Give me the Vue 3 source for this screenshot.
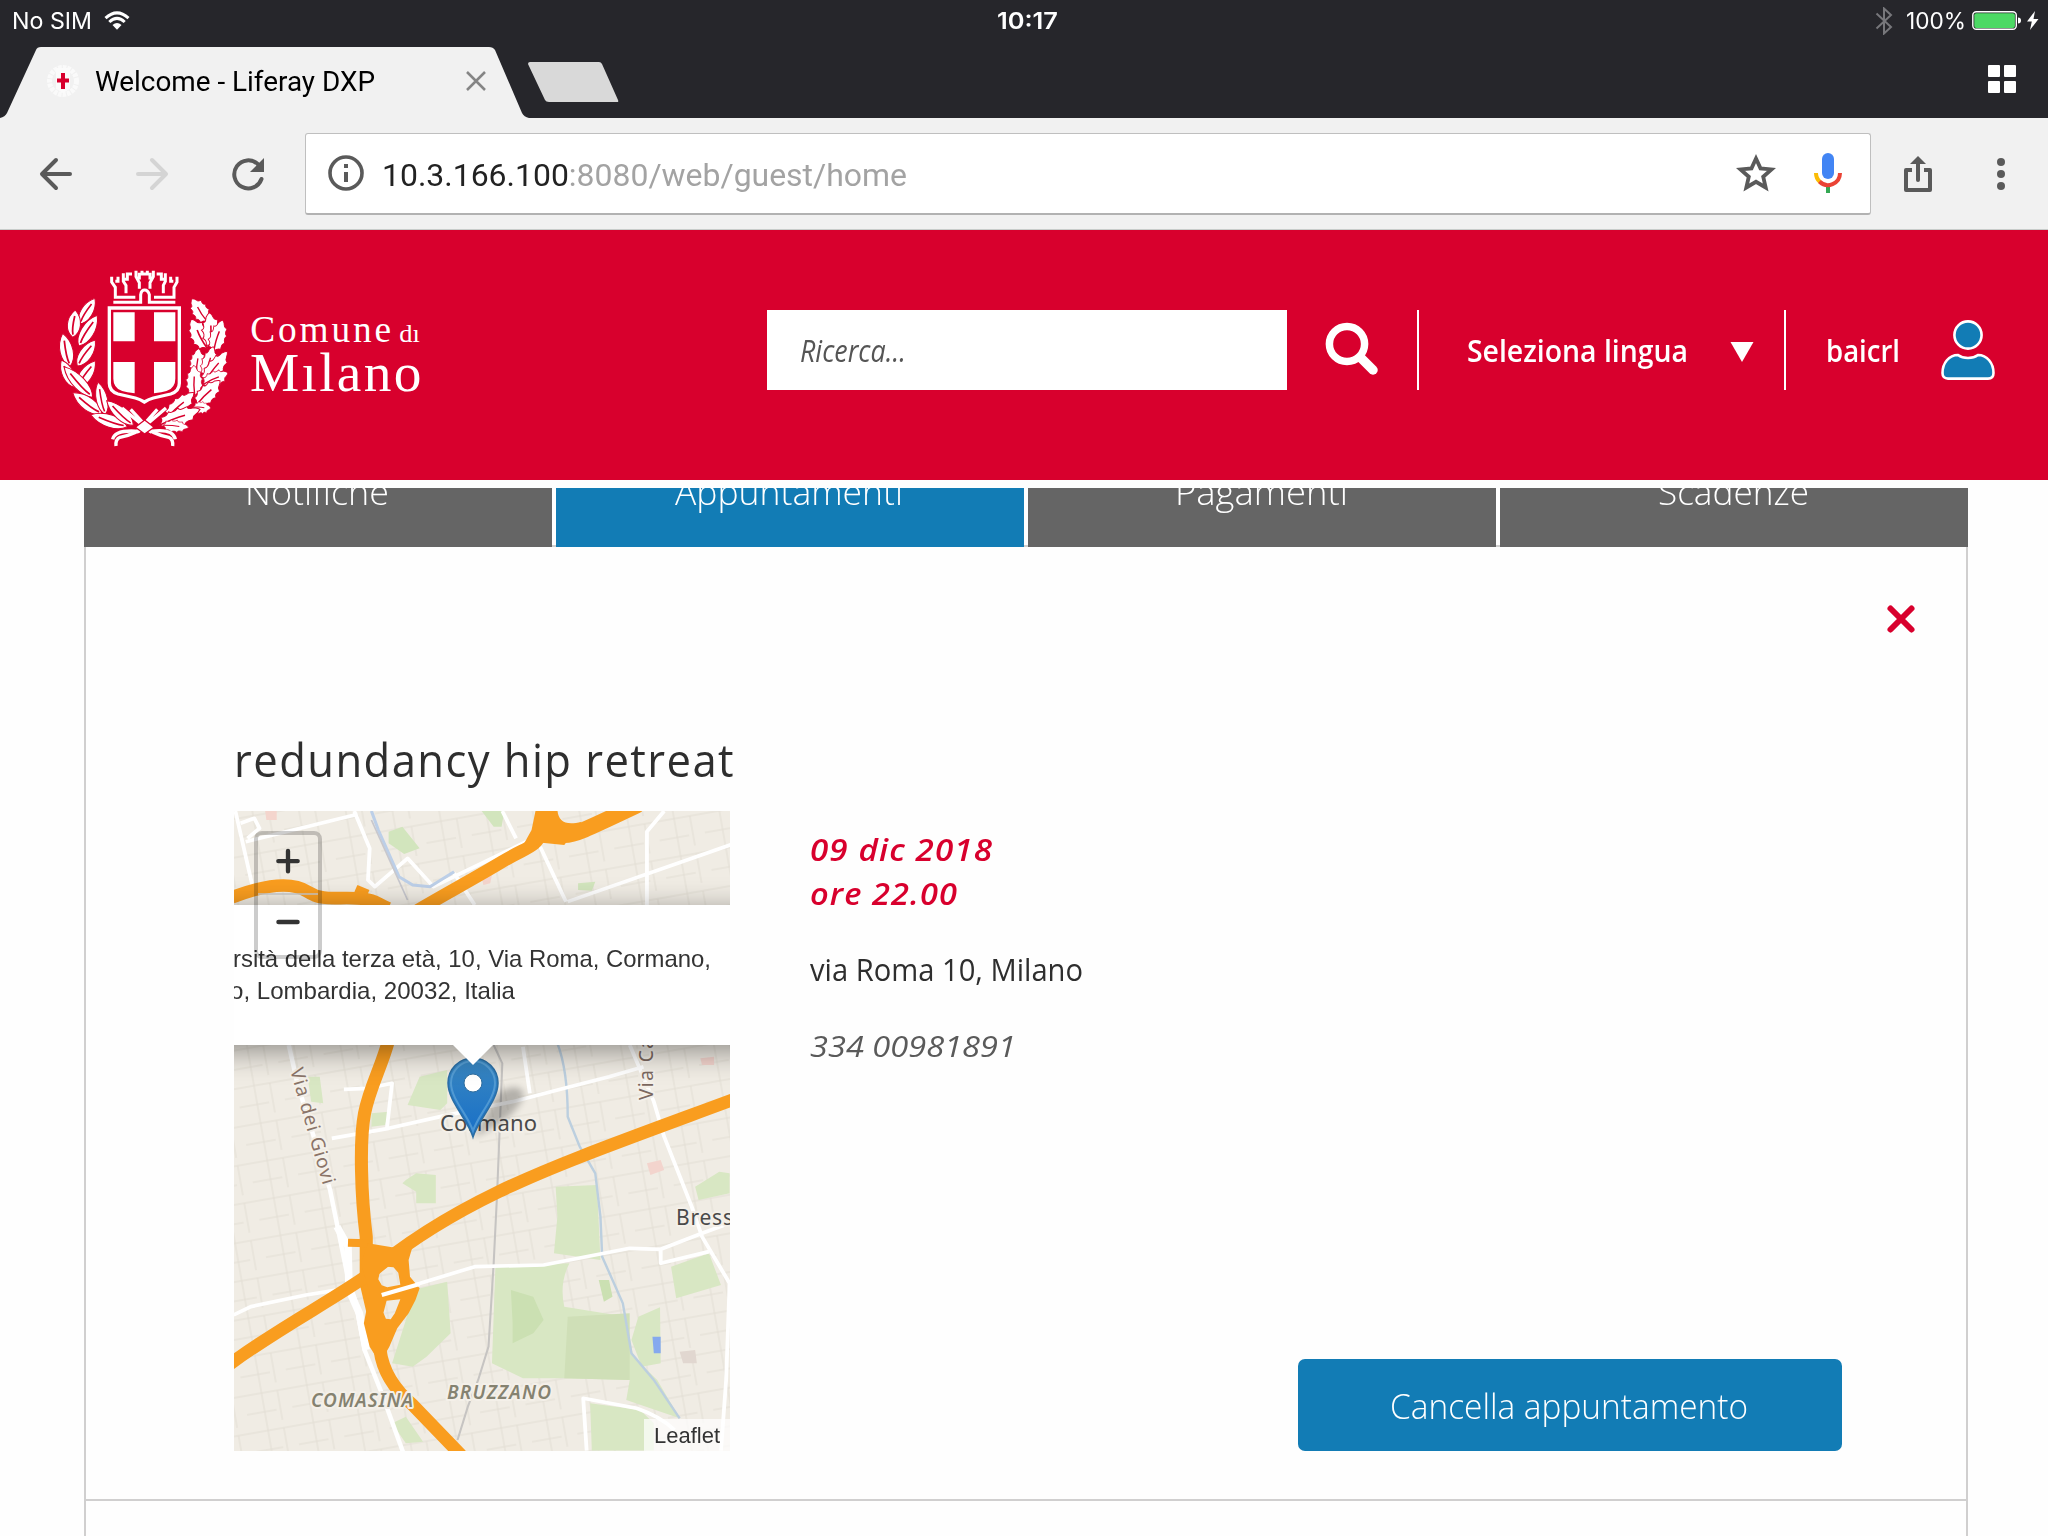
<script setup>
// Stretches a line of text horizontally so that it fills the given width.
const fit = (el, { value }) => {
  el.style.transform = 'none'
  el.style.marginRight = '0'
  const natural = el.getBoundingClientRect().width
  el.style.transform = `scaleX(${value / natural})`
  el.style.marginRight = `${value - natural}px`
}
const vFit = { mounted: fit }

const tabs = [
  { label: 'Notifiche', width: 144 },
  { label: 'Appuntamenti', width: 228, active: true },
  { label: 'Pagamenti', width: 173 },
  { label: 'Scadenze', width: 151 }
]

// Wreath leaves: base x, base y, tip x, tip y, width factor
const place = ([bx, by, tx, ty, w]) => {
  const len = Math.hypot(tx - bx, ty - by) / 100
  const deg = (Math.atan2(ty - by, tx - bx) * 180) / Math.PI + 90
  return `translate(${bx} ${by}) rotate(${deg.toFixed(1)}) scale(${w} ${len.toFixed(3)})`
}
const laurel = [
  [118, 222, 165, 145, 0.95], [98, 262, 106, 180, 1.05], [116, 288, 172, 196, 1.05],
  [90, 350, 68, 250, 1.05], [112, 348, 166, 270, 1], [104, 412, 64, 330, 0.95],
  [112, 412, 166, 332, 1], [158, 442, 72, 350, 1], [186, 492, 98, 428, 1.05],
  [196, 494, 174, 396, 0.9], [262, 530, 152, 494, 1], [280, 526, 200, 452, 0.95]
].map(place)
const oak = [
  [500, 212, 456, 146, 0.85], [500, 292, 454, 208, 1], [520, 290, 508, 188, 0.95],
  [522, 300, 548, 210, 0.85], [470, 372, 476, 296, 0.8], [498, 378, 520, 290, 0.8],
  [494, 396, 562, 304, 0.85], [492, 402, 564, 368, 0.8], [464, 434, 462, 346, 0.85],
  [472, 462, 540, 392, 0.9], [462, 472, 512, 474, 0.6], [382, 502, 462, 428, 0.85],
  [362, 524, 480, 478, 0.9], [372, 526, 446, 532, 0.6]
].map(place)
</script>

<template>
  <div class="screen">
    <div class="status">
      <div class="side">
        <span v-fit="80">No SIM</span>
        <svg class="wifi" width="26" height="20" viewBox="0 0 26 20" fill="none" stroke="#fff" stroke-width="3">
          <path d="M1.5 7.2Q13-3.6 24.500 7.200M5.300 11Q13 3.800 20.700 11" />
          <path d="M8.500 14Q13 10 17.500 14L13 18.800Z" fill="#fff" stroke="none" />
        </svg>
      </div>
      <span v-fit="61" class="clock">10:17</span>
      <div class="side end">
        <svg width="18" height="28" viewBox="0 0 18 28" fill="none" stroke="#77777b" stroke-width="2">
          <path d="M1.500 6.500 16 20 9 26.500V1.500L16 8 1.500 21.500" />
        </svg>
        <span v-fit="60" class="percent">100%</span>
        <svg width="68" height="22" viewBox="0 0 68 22">
          <rect x=".8" y="1.800" width="43.500" height="17.500" rx="3.500" fill="none" stroke="#fff" stroke-width="1.400" />
          <rect x="2.300" y="3.200" width="40.600" height="14.700" rx="2" fill="#4cd964" />
          <path d="M46 7.500q3 0 3 3t-3 3z" fill="#fff" />
          <path d="M63 1 55 11.500h4.800L58 20l8.500-11h-5z" fill="#fff" />
        </svg>
      </div>
    </div>

    <div class="strip">
      <svg class="shape" width="640" height="71" viewBox="0 0 640 71">
        <path d="M0 71Q5 70 7 66L36 3Q37 0 41 0H489Q493 0 495 3L522 66Q524 70 529 71Z" fill="#f1f1f1" />
        <path d="M530 15H599Q601 15 602 17L618 53Q619 55 617 55H549Q546 55 545 53L528 17Q528 15 530 15Z" fill="#d9d9d9" />
      </svg>
      <div class="tab">
        <svg width="34" height="36" viewBox="0 0 34 36">
          <circle cx="17" cy="18" r="13.500" fill="none" stroke="#fafafa" stroke-width="5" stroke-dasharray="3.500 1" />
          <path d="M10 5h14v21l-7 4-7-4z" fill="#fbfbfb" />
          <path d="M17 10v16M11 17.500h12" stroke="#d8002d" stroke-width="4" />
        </svg>
        <span v-fit="280" class="tab-title">Welcome - Liferay DXP</span>
        <svg width="22" height="22" viewBox="0 0 22 22" stroke="#858585" stroke-width="2.500"><path d="M2 2 20 20M20 2 2 20" /></svg>
      </div>
      <div class="grid"><i></i><i></i><i></i><i></i></div>
    </div>

    <div class="toolbar">
      <svg width="36" height="36" viewBox="0 0 36 36" fill="none" stroke="#5a5a5a" stroke-width="4" stroke-linecap="round" stroke-linejoin="round"><path d="M32 18H4.500M18 4 4 18l14 14" /></svg>
      <svg class="next" width="36" height="36" viewBox="0 0 36 36" fill="none" stroke="#d4d4d4" stroke-width="4" stroke-linecap="round" stroke-linejoin="round"><path d="M4 18h27.500M18 4l14 14-14 14" /></svg>
      <svg class="reload" width="36" height="36" viewBox="0 0 36 36">
        <path d="M28 8.300A14 14 0 1 0 31.500 23" fill="none" stroke="#5a5a5a" stroke-width="4" stroke-linecap="round" />
        <path d="M34 2v14H20z" fill="#5a5a5a" />
      </svg>
      <div class="address">
        <svg class="info" width="36" height="36" viewBox="0 0 36 36">
          <circle cx="18" cy="18" r="16" fill="none" stroke="#5a5a5a" stroke-width="3.600" />
          <path d="M18 9v4M18 17v10" stroke="#5a5a5a" stroke-width="4" />
        </svg>
        <span v-fit="525" class="url">10.3.166.100<em>:8080/web/guest/home</em></span>
        <svg class="star" width="40" height="40" viewBox="0 0 40 40"><path d="M20 5.500 24.500 15.400 35.500 16.400 27.200 23.700 29.700 34.500 20 28.800 10.300 34.500 12.800 23.700 4.500 16.400 15.500 15.400Z" fill="none" stroke="#5a5a5a" stroke-width="3.800" /></svg>
        <svg width="28" height="40" viewBox="0 0 28 40" fill="none" stroke-width="4">
          <rect x="8" y="0" width="12" height="26" rx="6" fill="#4285f4" />
          <path d="M12 33h4v7h-4z" fill="#34a853" />
          <path d="M2 20A12 12 0 0 0 6 29" stroke="#fbbc05" />
          <path d="M5.500 28.500A12 12 0 0 0 26 20" stroke="#ea4335" />
        </svg>
      </div>
      <svg class="share" width="28" height="36" viewBox="0 0 28 36">
        <path d="M8 14H2V34H26V14H20" fill="none" stroke="#5a5a5a" stroke-width="4" stroke-linejoin="round" />
        <path d="M14 24V5" stroke="#5a5a5a" stroke-width="4" stroke-linecap="round" />
        <path d="M14 0 22 8H6Z" fill="#5a5a5a" />
      </svg>
      <svg class="dots" width="8" height="32" viewBox="0 0 8 32" fill="#5a5a5a"><circle cx="4" cy="4" r="4" /><circle cx="4" cy="16" r="4" /><circle cx="4" cy="28" r="4" /></svg>
    </div>

    <header class="header">
      <svg class="logo" width="400" height="220" viewBox="0 0 1200 660">
        <defs>
          <g id="laurel-leaf">
            <path d="M0 0C-24-20-26-68 0-100C26-68 24-20 0 0Z" fill="#fff" stroke="#d8002d" stroke-width="3" />
            <path d="M0-10C-5-30-3-50 0-78" fill="none" stroke="#d8002d" stroke-width="5" />
          </g>
          <g id="oak-leaf">
            <path d="M0 4C-8-6-12-8-22-6C-18-18-22-22-30-28C-22-34-24-44-31-52C-20-54-22-62-24-74C-14-72-14-80-12-88Q-6-96 0-100Q8-94 10-86C12-78 18-78 24-76C20-64 20-58 30-54C22-46 24-38 30-30C20-26 20-18 22-8C12-8 8-6 0 4Z" fill="#fff" stroke="#d8002d" stroke-width="3" />
            <path d="M0 2Q-4-34 0-62" fill="none" stroke="#d8002d" stroke-width="5" />
          </g>
        </defs>
        <use v-for="(t, i) in laurel" :key="'l' + i" href="#laurel-leaf" :transform="t" />
        <use v-for="(t, i) in oak" :key="'o' + i" href="#oak-leaf" :transform="t" />
        <g fill="none" stroke="#fff" stroke-width="10">
          <path d="M246 474 330 544Q400 534 406 568M272 478 336 548M378 474 296 544Q224 538 218 568M352 478 290 548" />
          <path d="M314 528Q336 552 386 562Q400 568 398 588M314 528Q290 552 240 562Q226 568 228 588" />
        </g>
        <path d="M314 510 342 532 314 552 286 532Z" fill="#fff" stroke="#d8002d" stroke-width="4" />
        <path d="M208 174H418V400Q418 424 392 432L340 444Q326 448 313 456Q300 448 286 444L234 432Q208 424 208 400Z" fill="#d8002d" stroke="#fff" stroke-width="10" />
        <path d="M220 187H284V274H220ZM342 187H406V274H342ZM220 336H284V430Q236 426 226 408Q220 398 220 386ZM342 336H406V386Q406 398 400 408Q390 426 342 430Z" fill="#fff" />
        <g fill="none" stroke="#fff" stroke-width="9">
          <path d="M220 157H302V134Q304 120 314 120Q324 120 328 134V157H406" />
          <path d="M286 142H226V112L215 96V80M342 142H402V112L411 96V80M226 94H234V80M400 94H392V80M258 130V106L250 94V70M370 130V106L376 94V70M250 88H262V72H276M376 88H364V72H350M298 116V98L288 80V62M330 116V98L340 80V62M288 84H298V68M340 84H330V68M306 62V72H322V62" />
        </g>
        <g class="wordmark" fill="#fff">
          <text x="631" y="276" font-size="112" textLength="422" lengthAdjust="spacing">Comune</text>
          <text x="1078" y="276" font-size="78" textLength="62" lengthAdjust="spacingAndGlyphs">dı</text>
          <text x="630" y="422" font-size="166" textLength="514" lengthAdjust="spacing">Mılano</text>
        </g>
      </svg>
      <div class="search"><span v-fit="106">Ricerca...</span></div>
      <svg class="lens" width="54" height="54" viewBox="0 0 54 54" fill="none" stroke="#fff">
        <circle cx="22" cy="22" r="17.600" stroke-width="7.500" />
        <path d="M36 36 48 48" stroke-width="9.500" stroke-linecap="round" />
      </svg>
      <div class="lang">
        <span v-fit="221">Seleziona lingua</span>
        <svg width="24" height="20" viewBox="0 0 24 20" fill="#fff"><path d="M.5 0H23.500L12 20Z" /></svg>
      </div>
      <div class="user">
        <span v-fit="74">baicrl</span>
        <svg width="54" height="60" viewBox="0 0 54 60" fill="#127cb5" stroke="#fff" stroke-width="2.600">
          <circle cx="27" cy="15" r="13.600" />
          <path d="M1.500 53C1.500 43 8 35 17 35Q21 38 27 38T37 35C46 35 52.500 43 52.500 53Q52.500 58.600 47 58.600H7Q1.500 58.600 1.500 53Z" />
        </svg>
      </div>
    </header>

    <main class="content">
      <nav class="tabs">
        <div v-for="t in tabs" :key="t.label" class="item" :class="{ active: t.active }">
          <span v-fit="t.width">{{ t.label }}</span>
        </div>
      </nav>
      <section class="panel">
        <div class="close">
          <svg width="30" height="30" viewBox="0 0 30 30" stroke="#d8002d" stroke-width="6" stroke-linecap="round"><path d="M4.500 4.500 25.500 25.500M25.500 4.500 4.500 25.500" /></svg>
        </div>
        <h1><span v-fit="501">redundancy hip retreat</span></h1>
        <div class="row">
          <div class="map">
            <svg width="496" height="640" viewBox="0 0 496 640">
              <defs>
                <pattern id="streets" width="46" height="38" patternUnits="userSpaceOnUse" patternTransform="rotate(-10)">
                  <path d="M0 8H46M18 0V38M0 27H30M34 8V38" fill="none" stroke="#d9d4c9" stroke-width="1" />
                </pattern>
                <linearGradient id="pin" x1="0" y1="0" x2="0" y2="1"><stop offset="0" stop-color="#3a87c0" /><stop offset="1" stop-color="#176fc8" /></linearGradient>
                <filter id="soft" x="-30%" y="-30%" width="160%" height="160%"><feGaussianBlur stdDeviation="3.500" /></filter>
              </defs>
              <rect width="496" height="640" fill="#f0ece4" />
              <rect width="496" height="640" fill="url(#streets)" opacity=".6" />

              <g transform="matrix(.3444 0 0 .3333 -14.12 -91)">
                <path d="M760 273H826L818 320H795ZM490 335 530 320 580 385 535 402 490 370ZM1040 490 1090 485 1080 512 1040 510Z" fill="#d2e5bd" />
                <path d="M130 262H165V300H135ZM760 470 790 465 785 490 765 495Z" fill="#f4d5cd" />
                <g fill="none" stroke="#fff" stroke-width="11" stroke-linejoin="round">
                  <path d="M45 273 95 500M60 310 100 295 115 325 80 355M75 365 400 283M390 273 435 385 430 480 450 500 545 415 620 500 900 360M820 273 860 355M1290 273 1240 335V555M930 380 1005 545M1010 545 1490 372M680 460 740 555" />
                </g>
                <path d="M440 273 460 330 520 470 560 495 610 500 680 455" fill="none" stroke="#bccfe8" stroke-width="9" />
                <path d="M440 300 545 540" fill="none" stroke="#c7c7cd" stroke-width="5" />
                <g fill="none" stroke="#f99d1f">
                  <path d="M35 532C140 490 210 485 255 515S340 530 400 535S450 550 490 565" stroke-width="38" />
                  <path d="M560 580C640 530 740 475 820 425S910 390 940 330" stroke-width="38" />
                  <path d="M395 505 430 520" stroke-width="22" />
                  <path d="M950 250C940 300 970 345 1000 345S1060 330 1215 254" stroke-width="48" />
                </g>
                <path d="M918 265H980C980 300 1000 320 1050 305L1000 375 935 368 870 395 905 330Z" fill="#f99d1f" />
              </g>

              <g transform="matrix(.3444 0 0 .3333 -14.12 219)">
                <g fill="#d8e7c3">
                  <path d="M580 140 660 120V220L640 240 545 225ZM540 450 570 430 627 435V520H570L570 485 530 460ZM975 470 1095 465 1105 690 970 670 980 560ZM255 140H290L300 220 265 215ZM440 250 490 245 480 285 440 290ZM1380 470 1450 425 1480 430V490L1390 510Z" />
                  <path d="M800 710 1015 700Q985 760 1000 830L1180 860 1200 980 1270 1050 1335 1165 1180 1110 1190 1050 1000 1045 880 1045 790 1000ZM560 780 660 755 670 910 600 980 560 1010 500 1000 540 870ZM1215 860 1278 832 1280 1000 1225 1010 1195 930ZM1310 710 1420 670 1455 765 1325 805ZM1075 1120 1220 1140 1260 1180V1262H1080ZM500 1180 540 1160 590 1235 540 1240Z" />
                </g>
                <path d="M1010 860 1190 850V1050L1000 1045Z" fill="#cfdfb7" />
                <path d="M1100 750 1130 750 1140 800 1115 815ZM845 780 910 800 940 870 910 910 850 940 850 880Z" fill="#cbe0b2" />
                <path d="M1240 400 1280 390 1290 420 1250 435ZM1395 85 1435 80V105H1400Z" fill="#f3d4cd" />
                <path d="M1335 965 1380 960 1385 1000 1345 1000Z" fill="#e1d7d0" />
                <path d="M1256 920H1280V970H1260Z" fill="#85a9ee" />
                <path d="M980 40Q1010 120 1010 260L1045 350 1090 430 1105 560 1110 680 1170 820 1195 970 1260 1050 1335 1165" fill="none" stroke="#bccfdf" stroke-width="7" />
                <path d="M795 45 820 100 805 490 795 700 780 950 750 1050 720 1130 690 1230" fill="none" stroke="#c6c4c2" stroke-width="6" />
                <g fill="none" stroke="#fff" stroke-width="11" stroke-linejoin="round">
                  <path d="M200 45 225 160 320 480 370 735 395 820 420 960 470 1090 540 1290" stroke-width="13" />
                  <path d="M40 855 90 830 250 795 400 770M470 795 740 710 940 705 1190 655 1280 658 1400 610 1480 580M1280 660V700L1420 665" />
                  <path d="M1190 45 1260 215 1290 320 1370 530 1400 620 1480 760 1470 1050 1455 1262" />
                  <path d="M325 325 490 295 640 260 850 215 1000 175 1130 140 1230 110M485 295 500 160 430 175 360 178M880 50 900 190M1065 1262 1055 1105 1210 1135Q1280 1160 1320 1200" />
                </g>
                <path d="M340 590 372 650 375 780 405 850 425 960" fill="none" stroke="#fff" stroke-width="22" />
                <g fill="none" stroke="#f99d1f">
                  <path d="M490 30C470 110 435 170 420 250S410 500 425 620V760C450 860 455 900 465 960C475 1040 520 1090 560 1125L700 1275" stroke-width="38" />
                  <path d="M25 1005C170 895 320 815 430 735C520 655 640 570 810 485S1200 320 1500 205" stroke-width="38" />
                  <path d="M372 638 430 640" stroke-width="24" />
                </g>
                <path fill-rule="evenodd" d="M430 640 500 652 560 648 548 690 552 740 580 775 568 810 548 850 515 895 492 950 465 1000 435 950 418 880 435 790 410 700ZM486 710 464 728 460 748 470 766 486 772 524 764 518 728 504 712ZM484 812 475 848 482 866 496 868 508 850 524 808Z" fill="#f99d1f" />
                <path d="M470 795 580 762" stroke="#fff" stroke-width="12" />
              </g>

              <g class="place">
                <text x="0" y="0" transform="translate(56 259) rotate(74)" textLength="120" fill="#8a7468" font-size="19">Via dei Giovi</text>
                <text transform="translate(419 289) rotate(-90)" textLength="62" fill="#7b6860" font-size="19">Via Ca</text>
                <text x="206" y="320" textLength="97" fill="#4a4a4a" font-size="22">Cormano</text>
                <text x="442" y="414" textLength="57" fill="#4a4a4a" font-size="21">Bress</text>
                <text x="77" y="596" textLength="102" class="quarter">COMASINA</text>
                <text x="213" y="588" textLength="104" class="quarter">BRUZZANO</text>
              </g>
              <path d="M239 326 264 282Q285 270 290 283Q283 308 239 326Z" fill="#000" opacity=".25" filter="url(#soft)" />
              <path d="M239 326C234 309 214 290 214 272A25 25 0 0 1 264 272C264 290 244 309 239 326Z" fill="url(#pin)" stroke="#2a6da3" stroke-width="1.500" />
              <path d="M239 320C234 304 217 288 217 272A22 22 0 0 1 261 272C261 288 244 304 239 320Z" fill="none" stroke="#65a9da" stroke-width="2" opacity=".65" />
              <circle cx="239" cy="272" r="9" fill="#fff" stroke="#326f9e" stroke-width="1" />
            </svg>
            <div class="popup">
              <p class="line-a"><span v-fit="478">rsità della terza età, 10, Via Roma, Cormano,</span></p>
              <p class="line-b"><span v-fit="285">o, Lombardia, 20032, Italia</span></p>
            </div>
            <i class="tip"></i>
            <div class="zoom">
              <svg width="60" height="60" viewBox="0 0 60 60"><path d="M30 16.500V37.500M20 27H40" stroke="#333" stroke-width="4.500" stroke-linecap="round" /></svg>
              <svg width="60" height="60" viewBox="0 0 60 60"><path d="M20.500 26H39.500" stroke="#333" stroke-width="4.500" stroke-linecap="round" /></svg>
            </div>
            <div class="credit"><span v-fit="66">Leaflet</span></div>
          </div>
          <div class="details">
            <p class="when"><span v-fit="183">09 dic 2018</span></p>
            <p class="when"><span v-fit="148">ore 22.00</span></p>
            <p class="where"><span v-fit="273">via Roma 10, Milano</span></p>
            <p class="phone"><span v-fit="206">334 00981891</span></p>
          </div>
          <button class="cancel"><span v-fit="358">Cancella appuntamento</span></button>
        </div>
      </section>
      <section class="next-panel"></section>
    </main>
  </div>
</template>

<style>
body { background: #fff; overflow: hidden; }
</style>

<style scoped>
* { box-sizing: border-box; }
.screen { width: 2048px; height: 1536px; overflow: hidden; display: flex; flex-direction: column; background: #fefefe; font-family: "Open Sans", "Noto Sans", sans-serif; }
svg { display: block; flex: none; }
p, h1 { margin: 0; font-weight: 400; }
span { display: inline-block; white-space: nowrap; transform-origin: 0 50%; flex: none; }

.status { height: 47px; flex: none; background: #26262b; color: #fff; display: flex; align-items: flex-start; font: 23px/41px Inter, sans-serif; padding: 0 8px 0 12px; }
.status span { padding-top: 1px; }
.side { flex: 1; display: flex; align-items: center; height: 41px; }
.wifi { margin-left: 12px; }
.clock { font-weight: 600; margin-left: 2px; }
.end { justify-content: flex-end; }
.percent { margin-left: 13px; margin-right: 7px; }
.end svg:last-child { margin-left: 6px; }

.strip { height: 71px; flex: none; background: #26262b; position: relative; display: flex; justify-content: space-between; }
.shape { position: absolute; left: 0; top: 0; }
.tab { position: relative; display: flex; align-items: center; padding-left: 46px; height: 68px; }
.tab-title { margin-left: 15px; padding-top: 2px; font: 28px/68px Roboto, sans-serif; color: #000; }
.tab > svg:last-child { margin-left: 90px; }
.grid { display: grid; grid-template-columns: 12px 12px; grid-auto-rows: 12px; gap: 4px; margin: 18px 32px 0 0; }
.grid i { background: #fff; border-radius: 1px; }

.toolbar { height: 112px; flex: none; background: #f1f1f1; display: flex; align-items: center; padding-left: 38px; border-bottom: 1px solid #c8ccca; }
.next { margin-left: 60px; }
.reload { margin-left: 60px; }
.address { margin-left: 39px; width: 1566px; height: 82px; background: #fff; border: 1px solid #bfbfbf; border-bottom: 2px solid #b2b2b2; border-radius: 3px; display: flex; align-items: center; padding-left: 22px; }
.url { margin-left: 18px; padding-top: 3px; font: 32px/78px Roboto, sans-serif; color: #222; }
.url em { font-style: normal; color: #a3a3a3; }
.star { margin-left: auto; margin-right: 38px; }
.address > svg:last-child { margin-right: 28px; }
.share { margin-left: 33px; }
.dots { margin-left: 65px; }

.header { height: 250px; flex: none; background: #d8002d; color: #fff; display: flex; padding: 20px 0 0 40px; align-items: flex-start; font-size: 31px; line-height: 80px; font-weight: 600; }
.wordmark { font-family: "Liberation Serif", serif; font-weight: 400; }
.search { margin: 60px 0 0 327px; width: 520px; height: 80px; background: #fff; color: #555; padding-left: 33px; font-style: italic; font-weight: 400; display: flex; }
.lens { margin: 72px 0 0 38px; }
.lang { margin: 60px 0 0 38px; height: 80px; width: 369px; border: solid #fff; border-width: 0 2px; display: flex; align-items: center; padding-left: 48px; }
.lang svg { margin: 3px 0 0 42px; }
.user { margin-top: 60px; height: 80px; display: flex; align-items: center; padding-left: 40px; }
.user svg { margin-left: 41px; }

.content { padding: 8px 80px 0 84px; flex: 1; display: flex; flex-direction: column; }
.tabs { display: flex; gap: 4px; height: 59px; flex: none; background: linear-gradient(#fff 57px, #d0d0d0 57px); }
.item { flex: 1; background: #656565; color: #fff; font-size: 35px; line-height: 40px; font-weight: 350; overflow: hidden; display: flex; justify-content: center; }
.item span { margin-top: -16px; height: 40px; margin-left: -2px; }
.item.active { background: #127cb5; }
.panel { height: 954px; flex: none; border: solid #d0cfcf; border-width: 0 2px 2px; padding-left: 148px; }
.close { display: flex; justify-content: flex-end; padding: 57px 50px 0 0; height: 177px; }
h1 { font-size: 46px; line-height: 70px; height: 87px; color: #2e2e2e; letter-spacing: 1.5px; font-weight: 430; }
.row { display: flex; height: 640px; }
.map { position: relative; width: 496px; height: 640px; overflow: hidden; flex: none; }
.place { font-family: "Noto Sans", sans-serif; paint-order: stroke; stroke: #f4f0e9; stroke-width: 4px; stroke-linejoin: round; }
.quarter { fill: #858270; font-size: 19px; font-style: italic; font-weight: 600; }
.popup { position: absolute; left: -60px; right: -60px; top: 94px; height: 140px; background: #fff; box-shadow: 0 6px 28px rgba(0, 0, 0, .42); color: #333; font: 24px/32px "Liberation Sans", sans-serif; padding: 38px 0 0 59px; }
.line-b { margin-left: -3px; }
.tip { position: absolute; left: 218px; top: 233px; width: 42px; height: 21px; background: #fff; clip-path: polygon(0 0, 100% 0, 50% 100%); }
.zoom { position: absolute; left: 20px; top: 20px; width: 68px; height: 128px; border: 4px solid rgba(0, 0, 0, .2); border-radius: 8px; }
.zoom svg:first-child { height: 60px; border-bottom: 2px solid rgba(190, 190, 190, .75); }
.zoom svg { margin-bottom: 1px; }
.credit { position: absolute; right: 0; bottom: 0; height: 32px; width: 86px; padding-left: 10px; background: rgba(255, 255, 255, .7); color: #333; font: 22px/33px "Liberation Sans", sans-serif; }
.details { margin-left: 80px; padding-top: 17px; width: 488px; line-height: 44px; font-size: 30px; }
.when { color: #d8002d; font-style: italic; font-weight: 550; height: 44px; }
.when span { letter-spacing: 1px; }
.where { color: #2e2e2e; margin-top: 31px; font-size: 31px; height: 44px; }
.phone { color: #5a5a5a; font-style: italic; margin-top: 33px; font-weight: 370; }
.cancel { align-self: flex-end; width: 544px; height: 92px; border: 0; border-radius: 7px; background: #127cb5; color: #fff; font: 350 35px/92px "Open Sans", sans-serif; padding: 1px 2px 0 0; display: flex; justify-content: center; }
.next-panel { flex: 1; border: solid #d0cfcf; border-width: 0 2px; }
</style>
